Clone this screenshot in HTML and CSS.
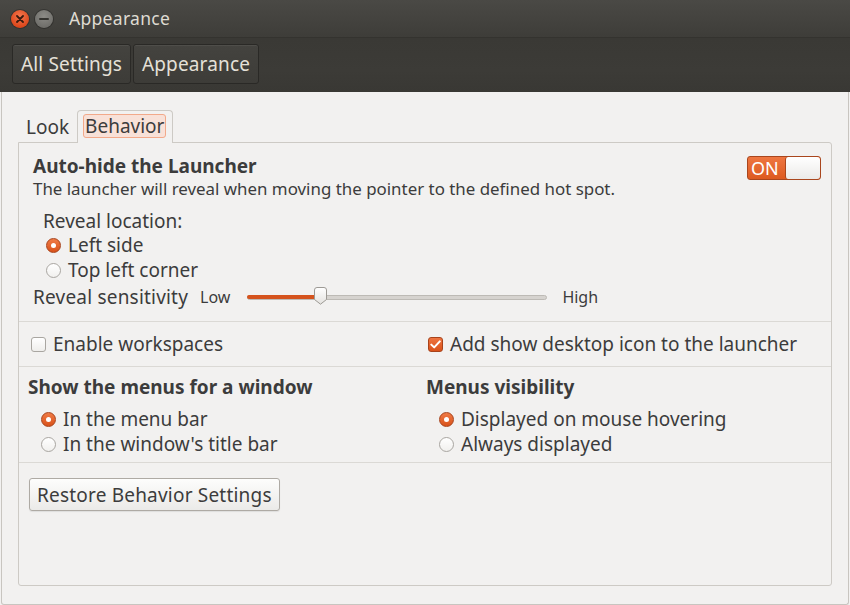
FILE: index.html
```html
<!DOCTYPE html>
<html>
<head>
<meta charset="utf-8">
<link rel="stylesheet" href="styles.css">
</head>
<body>
<div class="window">
  <div class="titlebar">
    <div class="wbtn close"><svg width="8" height="8" viewBox="0 0 8 8"><path d="M1 1L7 7M7 1L1 7" stroke="#3a1a0e" stroke-width="1.8" stroke-linecap="round"/></svg></div>
    <div class="wbtn min"><svg width="10" height="4" viewBox="0 0 10 4"><path d="M1 2H9" stroke="#34332f" stroke-width="2" stroke-linecap="round"/></svg></div>
    <div class="title">Appearance</div>
  </div>
  <div class="toolbar">
    <div class="tbtn">All Settings</div>
    <div class="tbtn">Appearance</div>
  </div>
  <div class="frame">
    <div class="tabs">
      <div class="tab">Look</div>
      <div class="tab active"><span class="focus">Behavior</span></div>
    </div>
    <div class="panel">
      <div class="sec sec-launcher">
        <div class="head-row">
          <div class="heading">Auto-hide the Launcher</div>
          <div class="switch"><span class="switch-on">ON</span><span class="switch-knob"></span></div>
        </div>
        <div class="desc">The launcher will reveal when moving the pointer to the defined hot spot.</div>
        <div class="reveal-label">Reveal location:</div>
        <div class="opt opt-indent"><span class="radio on"></span>Left side</div>
        <div class="opt opt-indent"><span class="radio"></span>Top left corner</div>
        <div class="sens">
          <span class="sens-label">Reveal sensitivity</span>
          <span class="small low">Low</span>
          <div class="slider">
            <div class="track"></div>
            <div class="fill"></div>
            <svg class="knob" width="13" height="18" viewBox="0 0 13 18"><defs><linearGradient id="kg" x1="0" y1="0" x2="0" y2="1"><stop offset="0" stop-color="#ffffff"/><stop offset="1" stop-color="#e4e2df"/></linearGradient></defs><path d="M3 0.5H10Q12.5 0.5 12.5 3V12.5L6.5 17.2L0.5 12.5V3Q0.5 0.5 3 0.5Z" fill="url(#kg)" stroke="#9d9a95"/></svg>
          </div>
          <span class="small high">High</span>
        </div>
      </div>
      <div class="sec sec-checks cols">
        <div class="col"><div class="opt"><span class="check"></span>Enable workspaces</div></div>
        <div class="col"><div class="opt"><span class="check on"><svg width="11" height="9" viewBox="0 0 11 9"><path d="M1.3 4.6L4.2 7.4L9.8 1.4" fill="none" stroke="#fff" stroke-width="2" stroke-linecap="round" stroke-linejoin="round"/></svg></span>Add show desktop icon to the launcher</div></div>
      </div>
      <div class="sec sec-menus cols">
        <div class="col">
          <div class="heading">Show the menus for a window</div>
          <div class="opt opt-menu"><span class="radio on"></span>In the menu bar</div>
          <div class="opt opt-menu"><span class="radio"></span>In the window's title bar</div>
        </div>
        <div class="col">
          <div class="heading">Menus visibility</div>
          <div class="opt opt-menu"><span class="radio on"></span>Displayed on mouse hovering</div>
          <div class="opt opt-menu"><span class="radio"></span>Always displayed</div>
        </div>
      </div>
      <div class="sec sec-restore">
        <button class="btn">Restore Behavior Settings</button>
      </div>
    </div>
  </div>
</div>
</body>
</html>
```
FILE: styles.css
```css
* { box-sizing: border-box; }
html, body {
  margin: 0;
  padding: 0;
  width: 850px;
  height: 605px;
  overflow: hidden;
  background: #f2f1f0;
  font-family: "Noto Sans", "Open Sans", sans-serif;
  color: #3c3c3c;
}
.window {
  display: flex;
  flex-direction: column;
  height: 605px;
}
.titlebar {
  height: 37px;
  display: flex;
  align-items: center;
  padding-left: 11px;
  background: linear-gradient(#4a4945, #3e3d39);
}
.wbtn {
  width: 18px;
  height: 18px;
  border-radius: 50%;
  display: flex;
  align-items: center;
  justify-content: center;
  margin-top: 1px;
}
.close {
  background: radial-gradient(circle at 50% 35%, #f5774e, #db4519 75%);
  box-shadow: 0 0 0 1px rgba(0,0,0,0.25);
}
.min {
  margin-left: 6px;
  background: radial-gradient(circle at 50% 35%, #8c8b86, #6f6e6a 75%);
  box-shadow: 0 0 0 1px rgba(0,0,0,0.25);
}
.title {
  margin-left: 16px;
  font-size: 17.5px;
  color: #dfdbd2;
  letter-spacing: 0.3px;
  line-height: 37px;
}
.toolbar {
  height: 55px;
  display: flex;
  align-items: flex-start;
  gap: 2px;
  padding: 6px 0 0 12px;
  background: linear-gradient(#3a3935, #3c3b37 60%, #393834);
  border-top: 1px solid #34332f;
}
.tbtn {
  height: 40px;
  line-height: 38px;
  padding: 0 8px;
  font-size: 19px;
  color: #e5e1d8;
  letter-spacing: 0.15px;
  border: 1px solid #2a2926;
  border-radius: 3px;
  background: linear-gradient(#44433f, #3d3c38);
  box-shadow: inset 0 1px rgba(255,255,255,0.06);
}
.frame {
  flex: 1;
  margin: 0 1px;
  border: 1px solid #c8c5c0;
  border-top: none;
  border-radius: 0 0 3px 3px;
  padding: 18px 16px 18px;
  display: flex;
  flex-direction: column;
}
.tabs {
  display: flex;
  align-items: flex-end;
  gap: 2px;
  padding-left: 2px;
  height: 32px;
  position: relative;
  z-index: 1;
}
.tab {
  font-size: 19px;
  line-height: 24px;
  padding: 0 6px 3px;
}
.tab.active {
  height: 33px;
  margin-bottom: -1px;
  padding: 3px 6px 0 5px;
  border: 1px solid #cdcac5;
  border-bottom: none;
  border-radius: 4px 4px 0 0;
  background: #f2f1f0;
}
.focus {
  display: block;
  height: 24px;
  line-height: 22px;
  padding: 0 1px;
  border: 1px solid #f2a98a;
  border-radius: 3px;
  background: #f8e1d8;
}
.panel {
  flex: 1;
  border: 1px solid #cdcac5;
  border-radius: 0 3px 3px 3px;
  display: flex;
  flex-direction: column;
}
.sec {
  border-bottom: 1px solid #dbd9d5;
}
.sec-launcher {
  height: 179px;
  padding: 11px 9px 0 14px;
}
.head-row {
  display: flex;
  justify-content: space-between;
  align-items: center;
  height: 24px;
}
.heading {
  font-size: 19px;
  font-weight: bold;
  line-height: 24px;
}
.desc {
  font-size: 16.9px;
  line-height: 22px;
}
.reveal-label {
  margin-top: 9px;
  padding-left: 10px;
  font-size: 19px;
  line-height: 24px;
}
.opt {
  display: flex;
  align-items: center;
  font-size: 19px;
  line-height: 25px;
  height: 25px;
}
.opt-indent { padding-left: 13px; }
.radio {
  width: 15px;
  height: 15px;
  border-radius: 50%;
  margin-right: 7px;
  flex: none;
  border: 1px solid #a9a6a1;
  background: linear-gradient(#ffffff, #f1f0ee);
  position: relative;
}
.radio.on {
  border-color: #a8431b;
  background: linear-gradient(#f07b46, #d9521a);
}
.radio.on::after {
  content: "";
  position: absolute;
  left: 4px;
  top: 4px;
  width: 5px;
  height: 5px;
  border-radius: 50%;
  background: #fff;
}
.check {
  width: 15px;
  height: 15px;
  border-radius: 3px;
  margin-right: 7px;
  flex: none;
  border: 1px solid #a9a6a1;
  background: linear-gradient(#ffffff, #efeeec);
  display: flex;
  align-items: center;
  justify-content: center;
}
.check.on {
  border-color: #a8431b;
  background: linear-gradient(#ee7440, #d9521a);
}
.switch {
  display: flex;
  width: 74px;
  height: 24px;
  margin-top: 3px;
  margin-right: 1px;
  border: 1px solid #a9461d;
  border-radius: 3px;
  background: linear-gradient(#ee7641, #dd5a20);
}
.switch-on {
  flex: 1;
  color: #fff;
  font-size: 18px;
  line-height: 22px;
  padding-left: 3px;
}
.switch-knob {
  width: 35px;
  border-left: 1px solid #a9461d;
  border-radius: 3px;
  background: linear-gradient(#ffffff, #ebeae8);
}
.sens {
  margin-top: 2px;
  display: flex;
  align-items: center;
  height: 24px;
}
.sens-label {
  font-size: 19px;
  line-height: 24px;
  letter-spacing: 0.2px;
}
.small {
  font-size: 16px;
}
.low { margin-left: 12px; }
.high { margin-left: 15px; }
.slider {
  position: relative;
  width: 300px;
  height: 24px;
  margin-left: 17px;
}
.track {
  position: absolute;
  left: 0;
  right: 0;
  top: 10px;
  height: 5px;
  border-radius: 3px;
  background: #d6d3cf;
  border: 1px solid #bdbab5;
}
.fill {
  position: absolute;
  left: 0;
  top: 10px;
  width: 72px;
  height: 4px;
  border-radius: 2px;
  background: #d5531d;
}
.knob {
  position: absolute;
  left: 67px;
  top: 2px;
}
.cols {
  display: grid;
  grid-template-columns: 398px 1fr;
  padding-left: 9px;
}
.sec-checks {
  height: 45px;
  align-items: center;
}
.sec-checks .opt { padding-left: 3px; }
.sec-checks .col + .col .opt { padding-left: 2px; }
.sec-menus {
  height: 96px;
  padding-top: 8px;
}
.sec-menus .heading { margin-bottom: 8px; }
.opt-menu { padding-left: 13px; }
.sec-restore {
  flex: 1;
  border-bottom: none;
  padding: 15px 0 0 10px;
}
.btn {
  height: 33px;
  padding: 0 7px;
  font-family: inherit;
  font-size: 19px;
  letter-spacing: 0.2px;
  color: #3c3c3c;
  border: 1px solid #aeaaa4;
  border-radius: 3px;
  background: linear-gradient(#fdfdfc, #ebeae8);
  box-shadow: 0 1px 1px rgba(0,0,0,0.08);
}
```
